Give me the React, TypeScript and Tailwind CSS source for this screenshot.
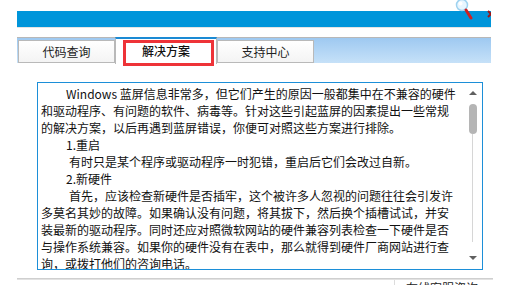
import React from "react";

const font = { fontFamily: '"Noto Sans CJK SC", "Noto Sans", sans-serif' };

function Tab({ label, active }: { label: string; active?: boolean }) {
  if (active) {
    return (
      <div className="relative w-[102px] h-[27px] bg-white border-x border-[#b9b9b9] border-t-2 border-t-[#1a8ad4] flex items-center justify-center text-[12px] text-[#111] font-medium pb-[2px]">
        {label}
      </div>
    );
  }
  return (
    <div className="w-[97px] h-[23px] bg-gradient-to-b from-white to-[#f4f4f4] border border-[#b9b9b9] flex items-center justify-center text-[12px] text-[#222]">
      {label}
    </div>
  );
}

const lines: { t: string; pl: number }[] = [
  { t: "Windows 蓝屏信息非常多，但它们产生的原因一般都集中在不兼容的硬件", pl: 25 },
  { t: "和驱动程序、有问题的软件、病毒等。针对这些引起蓝屏的因素提出一些常规", pl: 0 },
  { t: "的解决方案，以后再遇到蓝屏错误，你便可对照这些方案进行排除。", pl: 0 },
  { t: "1.重启", pl: 25 },
  { t: "有时只是某个程序或驱动程序一时犯错，重启后它们会改过自新。", pl: 28 },
  { t: "2.新硬件", pl: 25 },
  { t: "首先，应该检查新硬件是否插牢，这个被许多人忽视的问题往往会引发许", pl: 28 },
  { t: "多莫名其妙的故障。如果确认没有问题，将其拔下，然后换个插槽试试，并安", pl: 0 },
  { t: "装最新的驱动程序。同时还应对照微软网站的硬件兼容列表检查一下硬件是否", pl: 0 },
  { t: "与操作系统兼容。如果你的硬件没有在表中，那么就得到硬件厂商网站进行查", pl: 0 },
  { t: "询，或拨打他们的咨询电话。", pl: 0 },
];

export default function App() {
  return (
    <div className="relative w-[526px] h-[297px] bg-white overflow-hidden" style={font}>
      {/* top blue bar */}
      <div className="h-[11px]" />
      <div className="ml-[17px] w-[474px] h-[16px] bg-[#0095da]" />
      <div className="ml-[17px] w-[474px] h-[1px] bg-[#e4e4e4]" />

      {/* tab strip */}
      <div className="mt-[9px] ml-[17px] w-[474px] h-[26px] border-t border-[#b8b8b8] bg-gradient-to-b from-[#9ec9f1] to-[#c6e1f8] flex items-end">
        <div className="ml-[1px]">
          <Tab label="代码查询" />
        </div>
        <div className="-mb-[1px] self-end">
          <Tab label="解决方案" active />
        </div>
        <Tab label="支持中心" />
      </div>

      {/* content box */}
      <div className="mt-[19px] ml-[37px] w-[446px] h-[188px] border border-[#1c8fd8] flex overflow-hidden">
        <div className="flex-1 pl-[3px] pt-[2px] text-[12px] leading-[17px] text-[#111] whitespace-nowrap">
          {lines.map((l, i) => (
            <div key={i} style={{ paddingLeft: l.pl }}>
              {l.t}
            </div>
          ))}
        </div>
        <div className="w-[17px] mr-[1px] flex flex-col items-center">
          <div className="mt-[8px] w-0 h-0 border-x-[4px] border-x-transparent border-b-[4px] border-b-[#606060]" />
          <div className="mt-[9px] w-[8px] h-[30px] rounded-[4px] bg-[#b5b5b5]" />
          <div className="w-[1px] h-[108px] bg-[#d6d6d6]" />
          <div className="mt-[14px] w-0 h-0 border-x-[4px] border-x-transparent border-t-[4px] border-t-[#606060]" />
        </div>
      </div>

      {/* bottom */}
      <div className="mt-[8px] ml-[17px] w-[476px] h-[1px] bg-[#cfcfcf]" />
      <div className="ml-[17px] w-[476px] h-[1px] bg-[#e2e2e2]" />
      <div className="ml-[394px] h-[5px] overflow-hidden flex items-start">
        <div className="w-[1px] h-[5px] bg-[#dcdcdc]" />
        <div className="ml-[11px] -mt-[1px] text-[12px] leading-[17px] text-[#222] whitespace-nowrap">在线客服咨询</div>
      </div>

      {/* overlays: magnifier icon, close icon, red annotation */}
      <svg className="absolute left-[455px] top-[-3px]" width="20" height="24" viewBox="0 0 20 24">
        <circle cx="7" cy="8" r="5.5" fill="#e8f6ff" stroke="#9fd3f0" strokeWidth="1.5" />
        <circle cx="5.5" cy="6.5" r="2" fill="#ffffff" />
        <line x1="11" y1="13" x2="16" y2="21" stroke="#d02020" strokeWidth="3" strokeLinecap="round" />
      </svg>
      <svg className="absolute left-[487px] top-[10px]" width="8" height="8" viewBox="0 0 8 8">
        <path d="M1 1 L7 7 M7 1 L1 7" stroke="#a01414" strokeWidth="2" />
      </svg>
      <div className="absolute left-[491px] top-0 w-[35px] h-[30px] bg-white" />
      <div className="absolute left-[123px] top-[40px] w-[91px] h-[26px] border-[3px] border-[#ee3338]" />
    </div>
  );
}
